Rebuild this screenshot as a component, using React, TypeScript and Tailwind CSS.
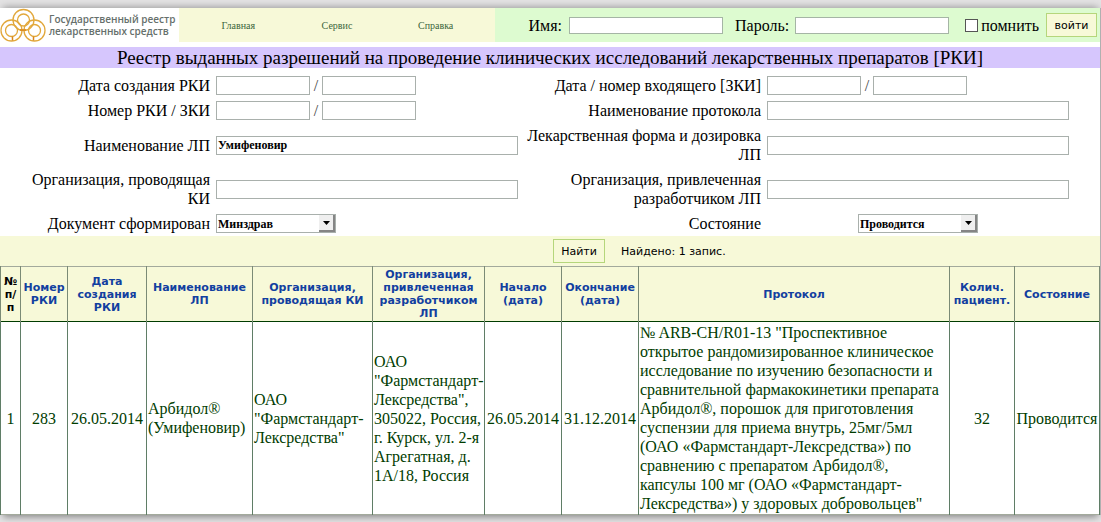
import { useState } from "react";

const menu = ["Главная", "Сервис", "Справка"];

const columns = [
  { title: "№ п/п", width: "w-[20px]" },
  { title: "Номер РКИ", width: "w-[47px]" },
  { title: "Дата создания РКИ", width: "w-[79px]" },
  { title: "Наименование ЛП", width: "w-[106px]" },
  { title: "Организация, проводящая КИ", width: "w-[120px]" },
  { title: "Организация, привлеченная разработчиком ЛП", width: "w-[112px]" },
  { title: "Начало (дата)", width: "w-[77px]" },
  { title: "Окончание (дата)", width: "w-[77px]" },
  { title: "Протокол", width: "" },
  { title: "Колич. пациент.", width: "w-[65px]" },
  { title: "Состояние", width: "w-[85px]" },
];

const trials = [
  {
    number: "283",
    created: "26.05.2014",
    drug: "Арбидол® (Умифеновир)",
    organization: 'ОАО "Фармстандарт-Лексредства"',
    developer: 'ОАО "Фармстандарт-Лексредства", 305022, Россия, г. Курск, ул. 2-я Агрегатная, д. 1А/18, Россия',
    start: "26.05.2014",
    end: "31.12.2014",
    protocol:
      '№ ARB-CH/R01-13 "Проспективное открытое рандомизированное клиническое исследование по изучению безопасности и сравнительной фармакокинетики препарата Арбидол®, порошок для приготовления суспензии для приема внутрь, 25мг/5мл (ОАО «Фармстандарт-Лексредства») по сравнению с препаратом Арбидол®, капсулы 100 мг (ОАО «Фармстандарт-Лексредства») у здоровых добровольцев"',
    patients: 32,
    status: "Проводится",
  },
];

export default function App() {
  return (
    <div className="bg-[#e4e3e4] pt-2 pb-[7px] font-['Liberation_Serif',serif] text-base leading-[19px] text-black">
      <main className="border-r border-[#b0b0b0] bg-white shadow-[0_-4px_7px_-3px_#999,0_5px_7px_-3px_#888]">
        <Header />
        <h1 className="mt-[5px] bg-[#d6c6fd] text-center text-[19px] leading-[21px]">
          Реестр выданных разрешений на проведение клинических исследований лекарственных препаратов [РКИ]
        </h1>
        <SearchForm />
        <TrialsTable />
      </main>
    </div>
  );
}

function Header() {
  return (
    <header className="flex h-[34px]">
      <a href="#" className="flex w-[179px] items-center gap-[3px]">
        <Logo />
        <span className="font-['Open_Sans',sans-serif] text-[10px] leading-[12px] font-semibold whitespace-nowrap text-[#66706c]">
          Государственный реестр
          <br />
          лекарственных средств
        </span>
      </a>
      <nav className="grid w-[316px] grid-cols-3 items-center bg-[#f7f9d8] px-[10px] text-center text-[10px] text-[#3c663c]">
        {menu.map((item) => (
          <a key={item} href="#">
            {item}
          </a>
        ))}
      </nav>
      <form className="flex flex-1 items-center justify-end bg-[#ddfbd0] pr-[3px]" onSubmit={(e) => e.preventDefault()}>
        <label htmlFor="login">Имя:</label>
        <input id="login" className="mr-3 ml-[7px] h-[17px] w-[154px] border border-[#a5b5a5] bg-white px-px text-xs" />
        <label htmlFor="password">Пароль:</label>
        <input
          id="password"
          type="password"
          className="mr-4 ml-1.5 h-[17px] w-[154px] border border-[#a5b5a5] bg-white px-px text-xs"
        />
        <input
          id="remember"
          type="checkbox"
          className="mr-[3px] size-[13px] appearance-none border border-[#555] bg-white checked:bg-[#3c663c]"
        />
        <label htmlFor="remember">помнить</label>
        <button className="ml-[7px] h-6 w-[51px] border border-[#b5d67b] bg-[#f7f9d8] font-['DejaVu_Sans',sans-serif] text-[11px]">
          войти
        </button>
      </form>
    </header>
  );
}

function Logo() {
  return (
    <svg className="shrink-0" width="46" height="34" viewBox="0 0 46 34" fill="none" stroke="#e2a83c" aria-hidden="true">
      <circle cx="23.5" cy="12" r="10.500" strokeWidth="1.300" />
      <circle cx="23.5" cy="12" r="6" strokeWidth="1.300" />
      <circle cx="11.500" cy="22.5" r="10.500" strokeWidth="1.300" />
      <circle cx="11.500" cy="22.5" r="6" strokeWidth="1.300" />
      <circle cx="34.500" cy="22.5" r="10.500" strokeWidth="1.300" />
      <circle cx="34.500" cy="22.5" r="6" strokeWidth="1.300" />
      <path d="M20 22h6M12.500 28.500v4M33.500 28.500v4" stroke="#d9861a" strokeWidth="1.500" />
    </svg>
  );
}

function SearchForm() {
  const [drug, setDrug] = useState("Умифеновир");

  return (
    <form onSubmit={(e) => e.preventDefault()}>
      <div className="grid grid-cols-[210fr_308fr_243fr_339fr] grid-rows-[25px_25px_44px_44px_25px] items-center pt-[5px]">
        <Label id="created">Дата создания РКИ</Label>
        <PairField id="created" />
        <Label id="incoming">Дата / номер входящего [ЗКИ]</Label>
        <PairField id="incoming" />

        <Label id="number">Номер РКИ / ЗКИ</Label>
        <PairField id="number" />
        <Label id="protocol">Наименование протокола</Label>
        <div className="pr-[31px] pl-1.5">
          <TextField id="protocol" />
        </div>

        <Label id="drug">Наименование ЛП</Label>
        <div className="pl-1.5">
          <TextField id="drug" value={drug} onChange={setDrug} />
        </div>
        <Label id="dosage">Лекарственная форма и дозировка ЛП</Label>
        <div className="pr-[31px] pl-1.5">
          <TextField id="dosage" />
        </div>

        <Label id="organization">Организация, проводящая КИ</Label>
        <div className="pl-1.5">
          <TextField id="organization" />
        </div>
        <Label id="developer">Организация, привлеченная разработчиком ЛП</Label>
        <div className="pr-[31px] pl-1.5">
          <TextField id="developer" />
        </div>

        <Label id="source">Документ сформирован</Label>
        <div className="flex pl-1.5">
          <Select id="source" options={["Минздрав", "Росздравнадзор"]} />
        </div>
        <Label id="status">Состояние</Label>
        <div className="flex justify-center pr-[31px] pl-1.5">
          <Select id="status" options={["Проводится", "Завершено"]} />
        </div>
      </div>
      <div className="grid h-[30px] grid-cols-2 items-center bg-[#f7f9d8] font-['DejaVu_Sans',sans-serif] text-[11px]">
        <div className="col-start-2 flex items-center gap-4 pl-[3px]">
          <button className="h-6 w-[52px] border border-[#b5d67b]">Найти</button>
          <span>Найдено: 1 запис.</span>
        </div>
      </div>
    </form>
  );
}

function Label({ id, children }: { id: string; children: React.ReactNode }) {
  return (
    <label id={`${id}-label`} htmlFor={id} className="justify-self-end text-right [&:nth-child(4n+1)]:pl-6">
      {children}
    </label>
  );
}

type TextFieldProps = { id: string; value?: string; onChange?: (value: string) => void };

function TextField({ id, value, onChange }: TextFieldProps) {
  return (
    <input
      id={id}
      value={value}
      onChange={(e) => onChange?.(e.target.value)}
      className="block h-[19px] w-full border border-[#a9b0ac] bg-white px-px text-xs font-bold"
    />
  );
}

function PairField({ id }: { id: string }) {
  return (
    <div className="flex items-center pl-1.5">
      <input id={id} className="h-[19px] w-[94px] border border-[#a9b0ac] px-px text-xs font-bold" />
      <span className="w-3 text-center text-[#444]">/</span>
      <input aria-labelledby={`${id}-label`} className="h-[19px] w-[94px] border border-[#a9b0ac] px-px text-xs font-bold" />
    </div>
  );
}

function Select({ id, options }: { id: string; options: string[] }) {
  return (
    <div className="relative w-[120px]">
      <select id={id} className="block h-[19px] w-full appearance-none border border-[#a9b0ac] bg-white px-px text-xs font-bold">
        {options.map((option) => (
          <option key={option}>{option}</option>
        ))}
      </select>
      <span className="pointer-events-none absolute top-px right-px flex h-[17px] w-4 items-center justify-center border-r-2 border-b-2 border-[#858585] bg-[#efefef]">
        <svg width="7" height="4" viewBox="0 0 7 4" aria-hidden="true">
          <path d="M0 0h7L3.500 4z" />
        </svg>
      </span>
    </div>
  );
}

function TrialsTable() {
  return (
    <table className="w-full table-fixed border-collapse border border-[#a3aa9c] text-[#003c00]">
      <thead className="bg-[#f7f9d8] font-['DejaVu_Sans',sans-serif] text-[11px] leading-[13px] text-[#1240a0]">
        <tr className="h-[55px] border-b border-[#003c00]">
          {columns.map(({ title, width }) => (
            <th key={title} className={`${width} border-x border-[#7b8b76] p-0 wrap-break-word first:text-black`}>
              {title}
            </th>
          ))}
        </tr>
      </thead>
      <tbody>
        {trials.map((trial, i) => (
          <tr key={trial.number} className="[&>td]:border-x [&>td]:border-[#5f7d66] [&>td]:px-px [&>td]:py-px">
            <td className="text-center">{i + 1}</td>
            <td className="text-center">{trial.number}</td>
            <td className="text-center">{trial.created}</td>
            <td>{trial.drug}</td>
            <td>{trial.organization}</td>
            <td>{trial.developer}</td>
            <td className="text-center">{trial.start}</td>
            <td className="text-center">{trial.end}</td>
            <td>{trial.protocol}</td>
            <td className="text-center">{trial.patients}</td>
            <td className="text-center">{trial.status}</td>
          </tr>
        ))}
      </tbody>
    </table>
  );
}
